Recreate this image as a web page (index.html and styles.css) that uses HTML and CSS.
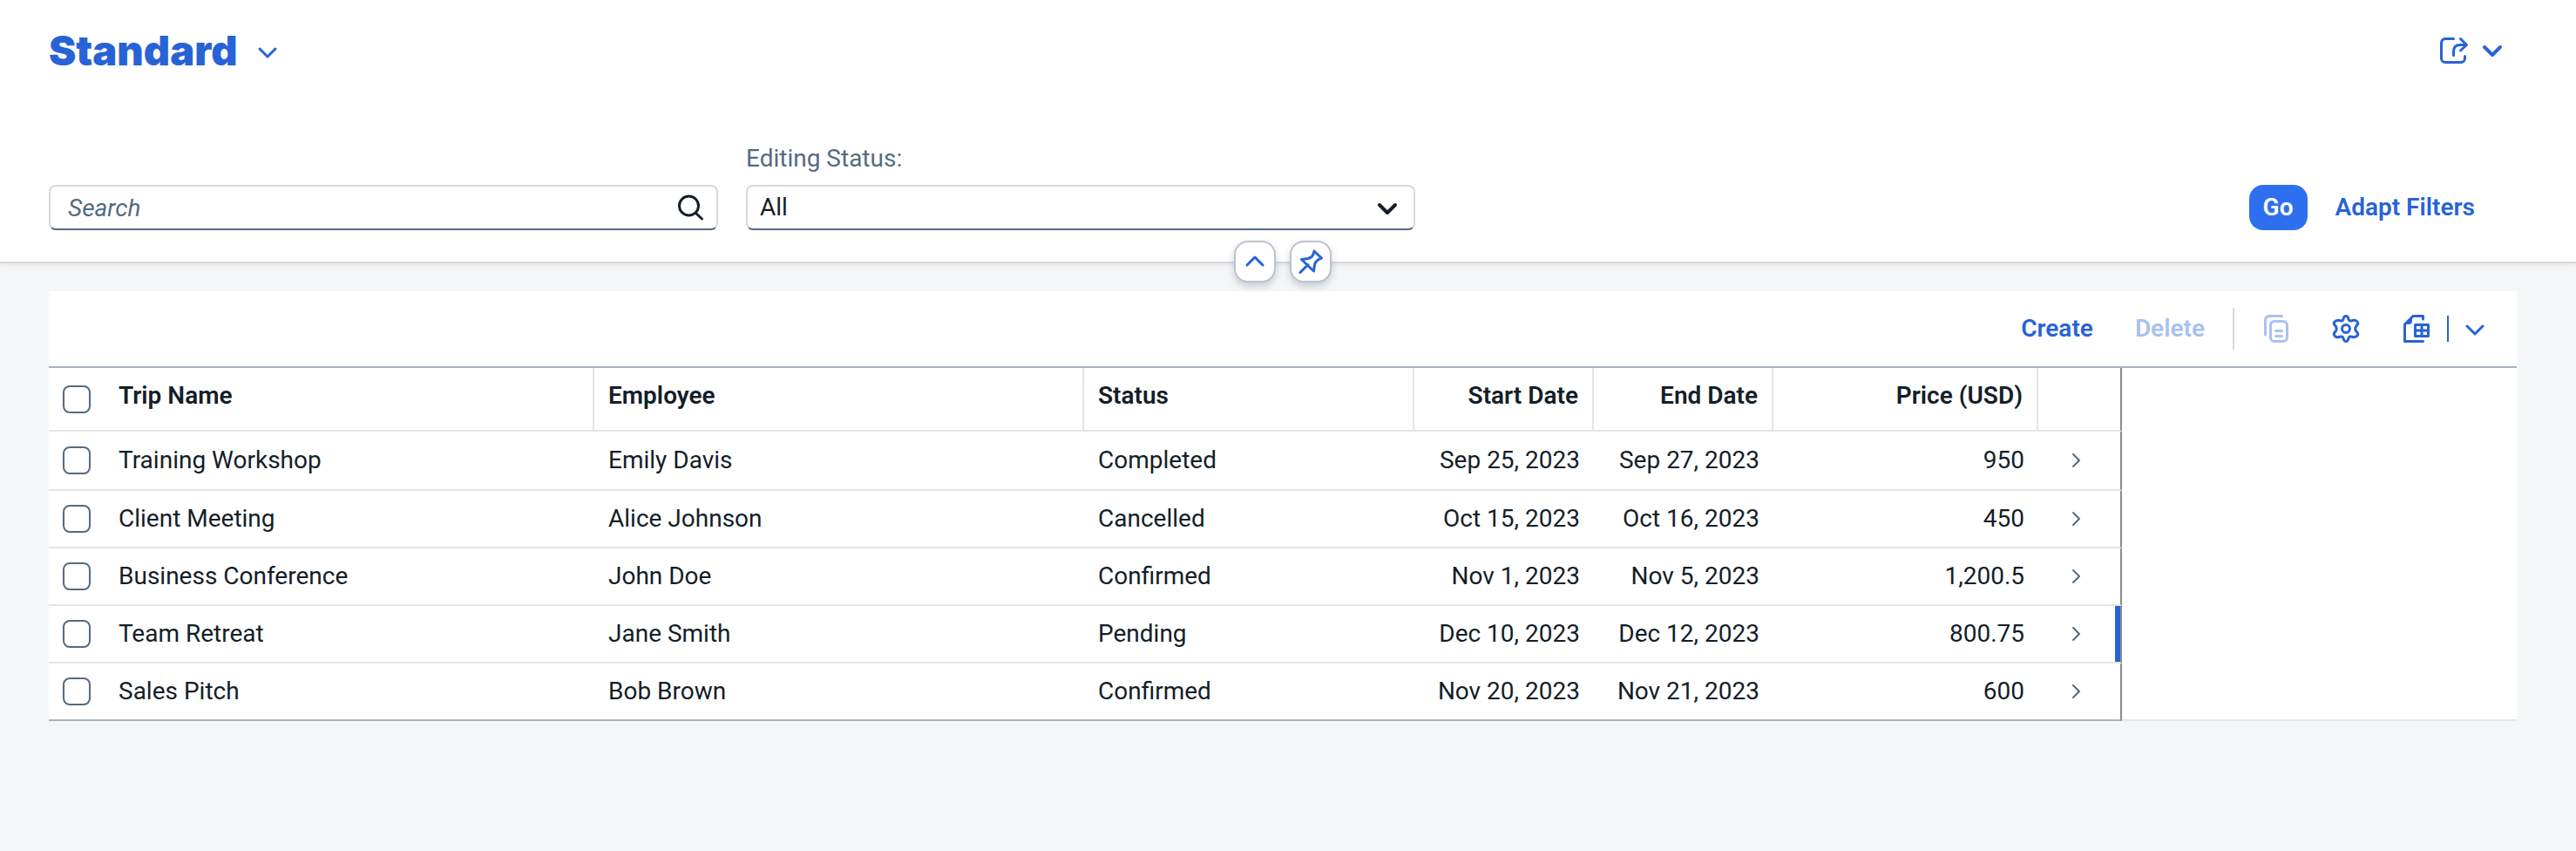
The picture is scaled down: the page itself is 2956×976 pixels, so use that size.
FILE: index.html
```html
<!DOCTYPE html>
<html lang="en">
<head>
<meta charset="utf-8">
<title>Trips</title>
<link rel="stylesheet" href="styles.css">
</head>
<body>
<header class="page-header">
  <div class="title-bar">
    <h1 class="title">Standard</h1>
    <button class="icon-button title-menu" aria-label="Select view">
      <svg class="icon" width="32" height="32" viewBox="0 0 32 32"><path d="M7 11l9 9 9-9" stroke-width="3"/></svg>
    </button>
    <div class="share">
      <button class="icon-button" aria-label="Share">
        <svg class="icon" width="36" height="36" viewBox="0 0 36 36"><path d="M17.500 4.500H8a4.500 4.500 0 0 0-4.500 4.500V27a4.500 4.500 0 0 0 4.500 4.500H26a4.500 4.500 0 0 0 4.500-4.500V24.500M17.500 23.500V19Q17.500 11.500 25 11.500H32.500M25.500 4.500l7 7-7 6.500"/></svg>
      </button>
      <button class="icon-button" aria-label="Share options">
        <svg class="icon" width="32" height="32" viewBox="0 0 32 32"><path d="M7 12l9 9 9-9" stroke-width="4"/></svg>
      </button>
    </div>
  </div>
  <form class="filter-bar">
    <div class="search">
      <input class="field" id="search" type="search" placeholder="Search" aria-label="Search">
      <button class="icon-button search-go" type="button" aria-label="Search">
        <svg class="icon" width="36" height="36" viewBox="0 0 36 36"><circle cx="16.500" cy="16" r="11"/><path d="M24.500 24.500l7 6.500"/></svg>
      </button>
    </div>
    <div class="filter">
      <label class="label" for="status">Editing Status:</label>
      <div class="select-wrap">
        <select class="field" id="status"><option>All</option></select>
        <svg class="icon select-arrow" width="32" height="32" viewBox="0 0 32 32"><path d="M7 11l9 9 9-9" stroke-width="4"/></svg>
      </div>
    </div>
    <div class="filter-actions">
      <button class="button button-primary" type="button">Go</button>
      <button class="button" type="button">Adapt Filters</button>
    </div>
  </form>
  <div class="header-toggles">
    <button class="toggle" aria-label="Collapse header">
      <svg class="icon" width="32" height="32" viewBox="0 0 32 32"><path d="M7 20l9-9 9 9"/></svg>
    </button>
    <button class="toggle" aria-label="Pin header">
      <svg class="icon" width="32" height="32" viewBox="0 0 32 32"><path d="M4 28.500l9-9M5.500 13.500L13 12.500C17 11.500 19.500 8 20 4L28.500 12C23 14 21 16 20.500 20L19.500 27Z"/></svg>
    </button>
  </div>
</header>
<main class="content">
  <div class="toolbar">
    <button class="button">Create</button>
    <button class="button" disabled>Delete</button>
    <span class="separator"></span>
    <button class="icon-button tool" aria-label="Copy" disabled>
      <svg class="icon" width="32" height="32" viewBox="0 0 32 32"><path d="M3.500 23V6A4.500 4.500 0 0 1 8 1.500H22.500"/><rect x="9.500" y="7.500" width="19" height="23" rx="4.500"/><path d="M15.500 18.500h7M15.500 24.500h7"/></svg>
    </button>
    <button class="icon-button tool" aria-label="Settings">
      <svg class="icon" width="32" height="32" viewBox="0 0 32 32"><circle cx="16" cy="16" r="4.500"/><path d="M13.500 3.500Q14 1.500 16 1.500T18.500 3.500L19.200 5.600Q20 7.400 22 7L24.700 6.300Q27.500 5.600 29 8T29.400 11L27.500 13.500Q26 16 27.500 18.500L29.400 21Q30.300 22.500 29 24T24.700 25.700L22 25Q20 24.600 19.200 26.400L18.500 28.500Q18 30.500 16 30.500T13.500 28.500L12.800 26.400Q12 24.600 10 25L7.300 25.700Q4.500 26.400 3 24T2.600 21L4.500 18.500Q6 16 4.500 13.500L2.600 11Q1.700 9.500 3 8T7.300 6.300L10 7Q12 7.400 12.800 5.600Z"/></svg>
    </button>
    <div class="export">
      <button class="icon-button" aria-label="Export to spreadsheet">
        <svg class="icon" width="32" height="32" viewBox="0 0 32 32"><path d="M24.500 5V1.500H13L3.500 11V30.500H24.500"/><path class="solid" d="M12 1V7a4 4 0 0 1-4 4H3z"/><rect x="15.500" y="11.500" width="15" height="13"/><path d="M23 12v12M16 18h14"/></svg>
      </button>
      <span class="split"></span>
      <button class="icon-button" aria-label="Export options">
        <svg class="icon" width="32" height="32" viewBox="0 0 32 32"><path d="M7 13l9 9 9-9"/></svg>
      </button>
    </div>
  </div>
  <table class="trips">
    <colgroup><col class="col-check"><col class="col-name"><col class="col-employee"><col class="col-status"><col class="col-date"><col class="col-date"><col class="col-price"><col class="col-nav"><col></colgroup>
    <thead>
      <tr><th class="check"><input type="checkbox" aria-label="Select all"></th><th class="divided">Trip Name</th><th class="divided">Employee</th><th class="divided">Status</th><th class="divided num">Start Date</th><th class="divided num">End Date</th><th class="divided num">Price (USD)</th><th class="nav"></th><th class="rest"></th></tr>
    </thead>
    <tbody>
      <tr><td class="check"><input type="checkbox" aria-label="Select Training Workshop"></td><td>Training Workshop</td><td>Emily Davis</td><td>Completed</td><td class="num">Sep 25, 2023</td><td class="num">Sep 27, 2023</td><td class="num">950</td><td class="nav"><svg class="arrow" width="24" height="24" viewBox="0 0 24 24"><path d="M8 5l7 7-7 7"/></svg></td><td class="rest"></td></tr>
      <tr><td class="check"><input type="checkbox" aria-label="Select Client Meeting"></td><td>Client Meeting</td><td>Alice Johnson</td><td>Cancelled</td><td class="num">Oct 15, 2023</td><td class="num">Oct 16, 2023</td><td class="num">450</td><td class="nav"><svg class="arrow" width="24" height="24" viewBox="0 0 24 24"><path d="M8 5l7 7-7 7"/></svg></td><td class="rest"></td></tr>
      <tr><td class="check"><input type="checkbox" aria-label="Select Business Conference"></td><td>Business Conference</td><td>John Doe</td><td>Confirmed</td><td class="num">Nov 1, 2023</td><td class="num">Nov 5, 2023</td><td class="num">1,200.5</td><td class="nav"><svg class="arrow" width="24" height="24" viewBox="0 0 24 24"><path d="M8 5l7 7-7 7"/></svg></td><td class="rest"></td></tr>
      <tr class="navigated"><td class="check"><input type="checkbox" aria-label="Select Team Retreat"></td><td>Team Retreat</td><td>Jane Smith</td><td>Pending</td><td class="num">Dec 10, 2023</td><td class="num">Dec 12, 2023</td><td class="num">800.75</td><td class="nav"><svg class="arrow" width="24" height="24" viewBox="0 0 24 24"><path d="M8 5l7 7-7 7"/></svg></td><td class="rest"></td></tr>
      <tr><td class="check"><input type="checkbox" aria-label="Select Sales Pitch"></td><td>Sales Pitch</td><td>Bob Brown</td><td>Confirmed</td><td class="num">Nov 20, 2023</td><td class="num">Nov 21, 2023</td><td class="num">600</td><td class="nav"><svg class="arrow" width="24" height="24" viewBox="0 0 24 24"><path d="M8 5l7 7-7 7"/></svg></td><td class="rest"></td></tr>
    </tbody>
  </table>
</main>
</body>
</html>
```
FILE: styles.css
```css
* { box-sizing: border-box; }

body {
  margin: 0;
  background: #f5f6f7;
  color: #131e29;
  font: 28px/32px Roboto, "Liberation Sans", sans-serif;
}

button, input, select { font: inherit; color: inherit; }

button {
  display: inline-flex;
  align-items: center;
  justify-content: center;
  padding: 0;
  border: 0;
  background: none;
  color: #2863d6;
}

.icon {
  display: block;
  fill: none;
  stroke: currentColor;
  stroke-width: 3;
  stroke-linecap: round;
  stroke-linejoin: round;
}

.icon .solid { fill: currentColor; stroke: none; }

.page-header {
  position: relative;
  padding: 28px 68px 36px 56px;
  background: #fff;
  border-bottom: 2px solid #d9d9d9;
  box-shadow: 0 2px 4px rgba(85, 107, 130, 0.12);
}

.title-bar { display: flex; align-items: center; }

.title {
  margin: 0;
  color: #2863d6;
  font-family: Inter, Roboto, sans-serif;
  font-size: 47px;
  line-height: 60px;
  font-weight: 900;
}

.title-menu { margin: 6px 0 0 18px; }

.share { display: flex; align-items: center; gap: 10px; margin: 0 12px 0 auto; }

.filter-bar {
  display: flex;
  align-items: flex-end;
  gap: 32px;
  margin-top: 78px;
}

.search, .filter { flex: 0 1 768px; }
.search, .select-wrap { position: relative; }

.label { display: block; margin-bottom: 14px; color: #556b82; }

.field {
  display: block;
  width: 100%;
  height: 52px;
  padding: 0 14px;
  border: 2px solid #d5dadf;
  border-bottom-color: #556b82;
  border-radius: 8px;
  background: #fff;
  appearance: none;
}

.search .field { padding: 0 60px 0 20px; }
.field::placeholder { color: #556b82; font-style: italic; opacity: 1; }

.search-go { position: absolute; top: 8px; right: 14px; color: #131e29; }
.select-arrow { position: absolute; top: 12px; right: 16px; color: #131e29; }

.filter-actions { display: flex; gap: 16px; margin: 0 32px 0 auto; }

.button {
  height: 52px;
  padding: 0 16px;
  border-radius: 16px;
  font-weight: 600;
}

.button-primary { background: #2e6ff0; color: #fff; }
button:disabled { color: #a9c1ef; }

.header-toggles {
  position: absolute;
  bottom: -24px;
  left: 0;
  right: 12px;
  display: flex;
  justify-content: center;
  gap: 16px;
}

.toggle {
  width: 48px;
  height: 48px;
  border: 2px solid #bcc3ca;
  border-radius: 16px;
  background: #fff;
  box-shadow: 0 4px 8px rgba(85, 107, 130, 0.3);
}

.content { margin: 32px 68px 0 56px; background: #fff; }

.toolbar {
  display: flex;
  align-items: center;
  justify-content: flex-end;
  height: 86px;
  padding-right: 32px;
}

.toolbar .button + .button { margin-left: 16px; }

.separator { width: 2px; height: 48px; margin: 0 16px; background: #d9d9d9; }
.tool { width: 64px; margin-right: 16px; }
.export { display: flex; align-items: center; gap: 20px; padding-left: 16px; }
.export .split + .icon-button { margin-left: -6px; }
.split { width: 2px; height: 30px; background: #2863d6; }

.trips {
  width: 100%;
  table-layout: fixed;
  border-collapse: separate;
  border-spacing: 0;
  border-top: 2px solid #a8b3bd;
}

.col-check { width: 64px; }
.col-name { width: 562px; }
.col-employee { width: 562px; }
.col-status { width: 379px; }
.col-date { width: 206px; }
.col-price { width: 304px; }
.col-nav { width: 96px; }

th, td {
  padding: 0 16px;
  border-bottom: 2px solid #e5e5e5;
  text-align: left;
  white-space: nowrap;
}

th { height: 73px; padding-bottom: 8px; font-weight: 600; }
td { height: 66px; }
tbody tr:first-child td { height: 68px; }
tbody tr:last-child td { border-bottom-color: #a8b3bd; }
.num { text-align: right; }
.divided { border-right: 2px solid #e5e5e5; }

.trips .check { padding: 0 16px; }

.check input {
  display: block;
  width: 32px;
  height: 32px;
  margin: 0;
  border: 2px solid #556b82;
  border-radius: 8px;
  background: #fff;
  appearance: none;
}

.nav { border-right: 2px solid #8c8c8c; }
.navigated .nav { box-shadow: inset -6px 0 #2863d6; }

.arrow {
  display: block;
  margin-left: 16px;
  fill: none;
  stroke: #556b82;
  stroke-width: 2;
  stroke-linecap: round;
  stroke-linejoin: round;
}

.trips .rest { border-bottom-color: transparent; }
.trips tbody tr:last-child .rest { border-bottom-color: #e5e5e5; }
```
